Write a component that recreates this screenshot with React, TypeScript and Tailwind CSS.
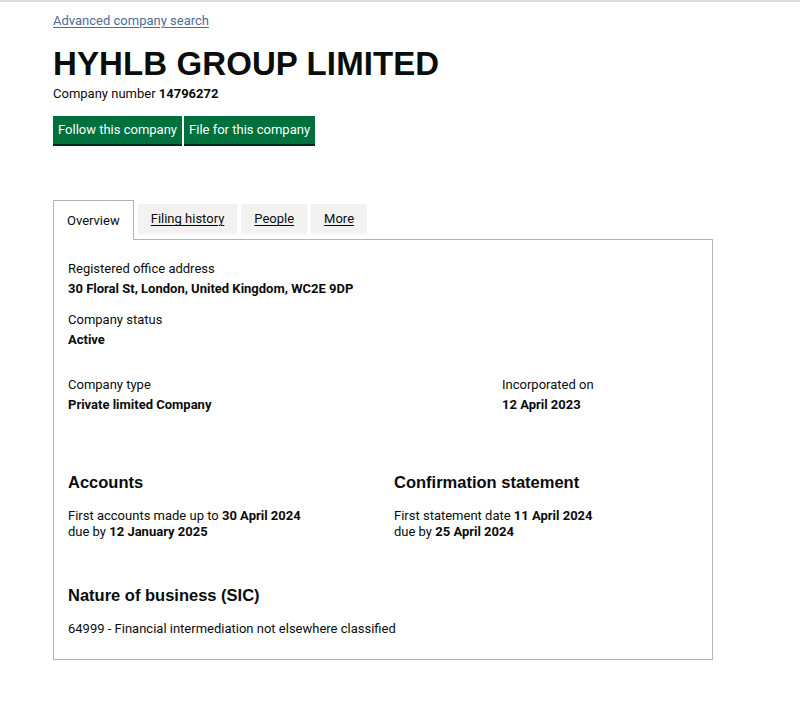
export default function App() {
  const body = "font-['Roboto','Liberation_Sans',sans-serif]"
  const head = "font-['Liberation_Sans','Arial',sans-serif]"
  return (
    <div className={`min-h-[704px] bg-white border-t-2 border-[#dcdcdc] text-[#0b0c0c] ${body}`}>
      <div className="pl-[53px] pr-[87px] pt-[6px] pb-[44px]">
        <a href="#" className="text-[13px] text-[#4c6c9c] underline underline-offset-2 leading-[16px]">
          Advanced company search
        </a>

        <h1 className={`${head} mt-[15px] text-[33px] font-bold leading-[34px] tracking-[0.1px]`}>
          HYHLB GROUP LIMITED
        </h1>
        <p className="mt-[5px] text-[13px] leading-[16px]">
          Company number <strong className="font-bold">14796272</strong>
        </p>

        <div className="mt-[14px] flex gap-[2px]">
          <button className="h-[28px] px-[5px] bg-[#00703c] text-white text-[13px] shadow-[0_2px_0_#002d18]">
            Follow this company
          </button>
          <button className="h-[28px] px-[5px] bg-[#00703c] text-white text-[13px] shadow-[0_2px_0_#002d18]">
            File for this company
          </button>
        </div>

        {/* Tabs */}
        <div className="mt-[56px] flex items-end gap-[4px]">
          <div className="relative z-10 -mb-px h-[40px] px-[13px] flex items-center bg-white border border-b-0 border-[#b1b4b6] text-[13px]">
            Overview
          </div>
          <a href="#" className="mb-[5px] h-[30px] px-[13px] flex items-center bg-[#f3f2f1] text-[13px] underline underline-offset-2">
            Filing history
          </a>
          <a href="#" className="mb-[5px] h-[30px] px-[13px] flex items-center bg-[#f3f2f1] text-[13px] underline underline-offset-2">
            People
          </a>
          <a href="#" className="mb-[5px] h-[30px] px-[13px] flex items-center bg-[#f3f2f1] text-[13px] underline underline-offset-2">
            More
          </a>
        </div>

        {/* Panel */}
        <div className="w-[660px] border border-[#b1b4b6] px-[14px] pt-[19px] pb-[20px] text-[13px] leading-[20px]">
          <div>
            <p>Registered office address</p>
            <p className="font-bold">30 Floral St, London, United Kingdom, WC2E 9DP</p>
          </div>
          <div className="mt-[11px]">
            <p>Company status</p>
            <p className="font-bold">Active</p>
          </div>

          <div className="mt-[25px] grid grid-cols-[434px_1fr]">
            <div>
              <p>Company type</p>
              <p className="font-bold">Private limited Company</p>
            </div>
            <div>
              <p>Incorporated on</p>
              <p className="font-bold">12 April 2023</p>
            </div>
          </div>

          <div className="mt-[55px] grid grid-cols-[326px_1fr]">
            <div>
              <h2 className={`${head} text-[16.5px] font-bold leading-[24px]`}>Accounts</h2>
              <p className="mt-[14px] leading-[16px]">
                First accounts made up to <strong>30 April 2024</strong>
              </p>
              <p className="leading-[16px]">
                due by <strong>12 January 2025</strong>
              </p>
            </div>
            <div>
              <h2 className={`${head} text-[16.5px] font-bold leading-[24px]`}>Confirmation statement</h2>
              <p className="mt-[14px] leading-[16px]">
                First statement date <strong>11 April 2024</strong>
              </p>
              <p className="leading-[16px]">
                due by <strong>25 April 2024</strong>
              </p>
            </div>
          </div>

          <div className="mt-[43px]">
            <h2 className={`${head} text-[16.5px] font-bold leading-[24px]`}>Nature of business (SIC)</h2>
            <p className="mt-[12px]">64999 - Financial intermediation not elsewhere classified</p>
          </div>
        </div>
      </div>
    </div>
  )
}
